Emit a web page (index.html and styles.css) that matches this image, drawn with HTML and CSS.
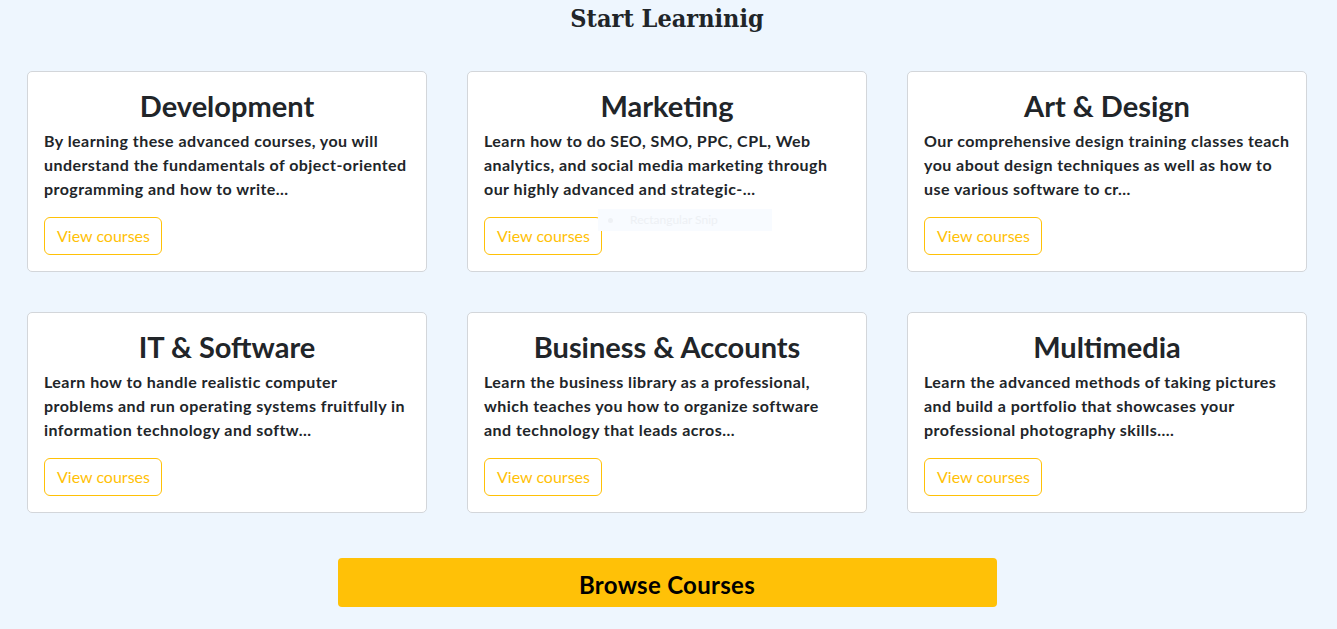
FILE: index.html
```html
<!DOCTYPE html>
<html lang="en">
<head>
<meta charset="utf-8">
<title>Start Learning</title>
<link rel="stylesheet" href="styles.css">
</head>
<body>
<section class="learn">
  <h1 class="learn-title">Start Learninig</h1>
  <div class="grid">
    <div class="card">
      <h2 class="card-title">Development</h2>
      <p class="card-text">By learning these advanced courses, you will understand the fundamentals of object-oriented programming and how to write...</p>
      <a class="btn-outline" href="#">View courses</a>
    </div>
    <div class="card">
      <h2 class="card-title">Marketing</h2>
      <p class="card-text">Learn how to do SEO, SMO, PPC, CPL, Web analytics, and social media marketing through our highly advanced and strategic-...</p>
      <a class="btn-outline" href="#">View courses</a>
      <div class="snip"><span class="snip-dot"></span>Rectangular Snip</div>
    </div>
    <div class="card">
      <h2 class="card-title">Art &amp; Design</h2>
      <p class="card-text">Our comprehensive design training classes teach you about design techniques as well as how to use various software to cr...</p>
      <a class="btn-outline" href="#">View courses</a>
    </div>
    <div class="card">
      <h2 class="card-title">IT &amp; Software</h2>
      <p class="card-text">Learn how to handle realistic computer problems and run operating systems fruitfully in information technology and softw...</p>
      <a class="btn-outline" href="#">View courses</a>
    </div>
    <div class="card">
      <h2 class="card-title">Business &amp; Accounts</h2>
      <p class="card-text">Learn the business library as a professional, which teaches you how to organize software and technology that leads acros...</p>
      <a class="btn-outline" href="#">View courses</a>
    </div>
    <div class="card">
      <h2 class="card-title">Multimedia</h2>
      <p class="card-text">Learn the advanced methods of taking pictures and build a portfolio that showcases your professional photography skills....</p>
      <a class="btn-outline" href="#">View courses</a>
    </div>
  </div>
  <div class="browse-wrap">
    <a class="btn-browse" href="#">Browse Courses</a>
  </div>
</section>
</body>
</html>
```
FILE: styles.css
```css
* { box-sizing: border-box; }
html, body { margin: 0; padding: 0; }
body {
  background: #eef6fe;
  font-family: Lato, "Noto Sans", sans-serif;
  color: #212529;
  width: 1337px;
  height: 629px;
  overflow: hidden;
}
.learn {
  padding: 0 30px 0 27px;
}
.learn-title {
  margin: 0;
  padding-top: 3px;
  height: 71px;
  text-align: center;
  font-family: "DejaVu Serif Condensed", "DejaVu Serif", serif;
  font-stretch: condensed;
  font-size: 25px;
  font-weight: bold;
  line-height: 32px;
  color: #212529;
}
.grid {
  display: grid;
  grid-template-columns: repeat(3, 400px);
  column-gap: 40px;
  row-gap: 40px;
}
.card {
  position: relative;
  background: #fff;
  border: 1px solid #d3d6da;
  border-radius: 5px;
  padding: 16px;
  height: 201px;
}
.card-title {
  margin: 0 0 6px;
  text-align: center;
  font-size: 29px;
  font-weight: 700;
  line-height: 35px;
  color: #212529;
}
.card-text {
  margin: 0 0 16px;
  font-size: 16px;
  font-weight: 700;
  line-height: 24px;
  letter-spacing: 0.45px;
  color: #212529;
}
.btn-outline {
  display: inline-block;
  height: 38px;
  padding: 0 11px 0 12px;
  border: 1px solid #ffc107;
  border-radius: 6px;
  color: #ffc107;
  font-size: 16px;
  line-height: 36px;
  text-decoration: none;
}
.snip {
  position: absolute;
  left: 130px;
  top: 137px;
  width: 174px;
  height: 22px;
  background: #f8fbff;
  color: #edf0f4;
  font-size: 12px;
  line-height: 22px;
  padding-left: 32px;
}
.snip-dot {
  position: absolute;
  left: 10px;
  top: 9px;
  width: 5px;
  height: 5px;
  border-radius: 50%;
  background: #eef1f5;
}
.browse-wrap {
  display: flex;
  justify-content: center;
  padding-top: 45px;
}
.btn-browse {
  display: block;
  width: 659px;
  height: 49px;
  background: #ffc107;
  border-radius: 4px;
  color: #000;
  text-align: center;
  font-size: 24px;
  font-weight: 700;
  letter-spacing: 0.3px;
  line-height: 53px;
  text-decoration: none;
}
```
